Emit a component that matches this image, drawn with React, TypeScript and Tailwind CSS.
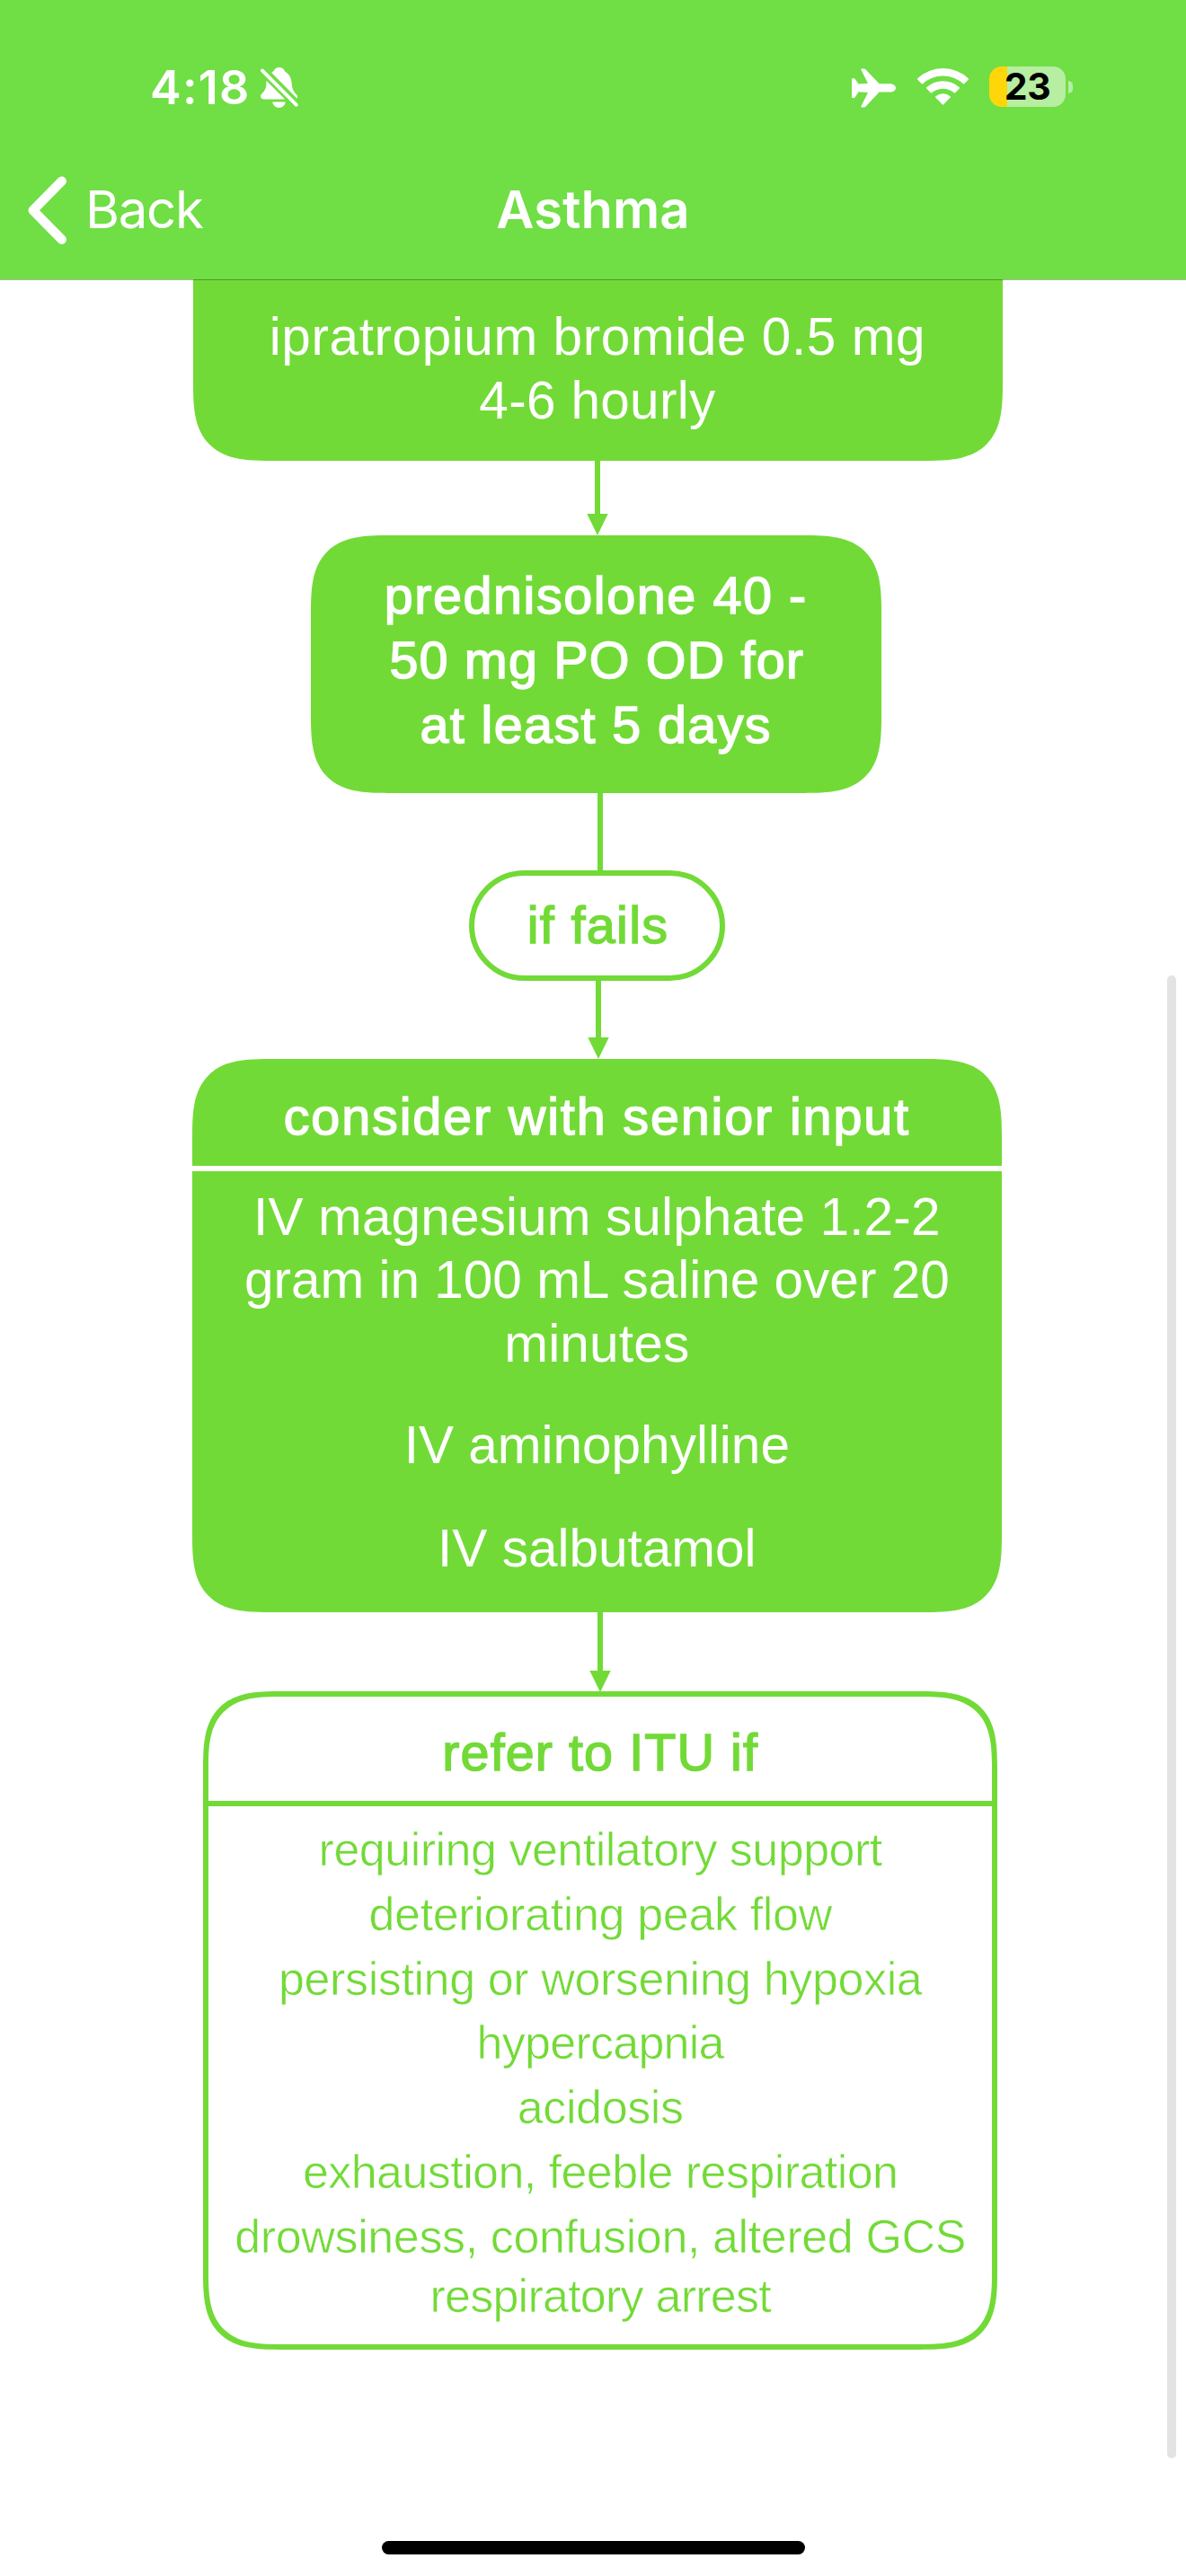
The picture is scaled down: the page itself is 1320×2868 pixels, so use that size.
import React from "react";

function BellOff() {
  return (
    <svg width="42" height="46" viewBox="0 0 42 46" fill="#fff">
      <path d="M12 5.7C13.6 5 14.4 4.400 15.200 3C17.300-1 24.300-1 26.300 3C27 4.400 27.600 5 29 5.900C33.200 9 34.500 13.500 34.800 19C35.200 25 37.500 27.500 40.300 30.800C41.300 32.200 41.200 33.600 40.400 34.500Z" />
      <path d="M6.400 14.700L27.200 35.600H3.600C0 35.600-1.200 31.600 1.500 29.200C5.500 25.400 6.800 22 6.400 14.700Z" />
      <path d="M13.300 38.600H27.700C27 42.500 24.300 45 20.500 45C16.700 45 14 42.500 13.300 38.600Z" />
      <path d="M2 3.700L39.700 41.600" stroke="#fff" strokeWidth="4" strokeLinecap="round" />
    </svg>
  );
}

function Plane() {
  return (
    <svg width="49" height="44" viewBox="0 0 49 44" fill="#fff">
      <path d="M0 11.200H2.500Q3.200 11.200 3.700 12L7.600 17.500L18 16.800L10.400 1.800Q10 .5 11.300 .5H13.500Q14.800 .5 15.600 1.400L30.600 17.200H42.500C46.500 17.200 49 19.600 49 21.900C49 24.200 46.500 26.600 42.500 26.600H30.600L15.600 42.600Q14.800 43.500 13.500 43.500H11.300Q10 43.500 10.400 42.200L18 27L7.600 26.300L3.700 32.200Q3.200 33 2.500 33H0Z" />
    </svg>
  );
}

function Wifi() {
  return (
    <svg width="57" height="43" viewBox="0 0 57 43" fill="#fff">
      <path d="M.3 13.800Q-.4 13 .3 12.300A41 41 0 0 1 56.700 12.300Q57.400 13 56.700 13.800L52.200 18.200Q51.600 18.800 50.900 18.200A33 33 0 0 0 6.100 18.200Q5.400 18.800 4.800 18.200Z" />
      <path d="M10.200 23.600Q9.600 23 10.200 22.300A27 27 0 0 1 46.800 22.300Q47.400 23 46.800 23.600L42.200 28.200Q41.500 28.800 40.800 28.200A19 19 0 0 0 16.200 28.200Q15.500 28.800 14.800 28.200Z" />
      <path d="M20.300 33.500Q19.700 32.800 20.400 32.200A13 13 0 0 1 36.600 32.200Q37.300 32.800 36.700 33.500L29.200 41.300Q28.500 42 27.800 41.300Z" />
    </svg>
  );
}

function Battery() {
  return (
    <div className="flex items-center gap-[3px]">
      <div className="flex h-[45px] w-[85px] items-center justify-center rounded-[14px] bg-[linear-gradient(90deg,#ffd60a_20px,#b7eea2_20px)] text-[41px] font-bold tracking-[-0.33px] text-black">
        23
      </div>
      <div className="h-[14px] w-[5px] rounded-r-full bg-[#b7eea2]" />
    </div>
  );
}

function Header() {
  return (
    <header className="relative z-10 h-[311px] bg-[#70de45] font-['Inter'] text-white">
      <div className="flex h-[196px] items-center pr-[126px] pl-[167px]">
        <span className="w-[123px] text-[52px] font-semibold tracking-[1.27px]">4:18</span>
        <BellOff />
        <div className="-mt-[3px] ml-auto flex items-center">
          <div className="mt-[3px] mr-6">
            <Plane />
          </div>
          <div className="mr-[23px]">
            <Wifi />
          </div>
          <Battery />
        </div>
      </div>
      <div className="grid h-[76px] grid-cols-[1fr_auto_1fr] items-center px-[31px] text-[58px] leading-none">
        <div className="flex items-center gap-[21px]">
          <svg width="43" height="76" viewBox="0 0 43 76" fill="none">
            <path d="M37.700 5.700L5.700 38.200L37.700 70.700" stroke="#fff" strokeWidth="10.400" strokeLinecap="round" strokeLinejoin="round" />
          </svg>
          <span className="-mt-0.5 tracking-[-1.22px]">Back</span>
        </div>
        <h1 className="-mt-0.5 font-semibold">Asthma</h1>
      </div>
      <div className="absolute top-full left-0 h-px w-full bg-black/30" />
    </header>
  );
}

function Arrow({ height, className }: { height: number; className: string }) {
  return (
    <svg className={className} width="24" height={height} viewBox={`0 0 24 ${height}`} fill="#72da37">
      <rect x="9" y="0" width="6" height={height - 20} />
      <path d={`M.3 ${height - 24}H23.700L12 ${height}Z`} />
    </svg>
  );
}

const regular = "text-[58.5px] leading-[70.5px]";
const medium = "text-[57.5px] leading-[72px] [-webkit-text-stroke:1.5px_currentColor]";
const light = "text-[52px] leading-[71.8px] [-webkit-text-stroke:0.6px_#fff]";

export default function App() {
  return (
    <div className="relative h-[2868px] w-[1320px] overflow-hidden bg-white font-['Liberation_Sans',sans-serif]">
      <Header />
      <main className="flex flex-col items-start text-center whitespace-nowrap text-white">
        <section className={`ml-[214.5px] h-[202px] w-[901px] rounded-b-[86px] bg-[#72da37] pt-[29px] [corner-shape:superellipse(1.55)] ${regular}`}>
          <p className="tracking-[0.58px]">ipratropium bromide 0.5 mg</p>
          <p className="tracking-[0.32px]">4-6 hourly</p>
        </section>
        <Arrow height={83} className="ml-[653px]" />

        <section className={`ml-[346px] h-[287px] w-[634.5px] rounded-[86px] bg-[#72da37] pt-[31.4px] [corner-shape:superellipse(1.55)] ${medium}`}>
          <p className="tracking-[1.58px]">prednisolone 40 -</p>
          <p className="pl-[2px] tracking-[1.17px]">50 mg PO OD for</p>
          <p className="tracking-[1.38px]">at least 5 days</p>
        </section>
        <div className="ml-[665px] h-[86px] w-[6px] bg-[#72da37]" />

        <section className={`ml-[522px] flex h-[123px] w-[285px] items-center justify-center rounded-full border-[6px] border-[#72da37] pb-[1.5px] pl-[2px] text-[#72da37] ${medium}`}>
          <p className="tracking-[1.34px]">if fails</p>
        </section>
        <Arrow height={87} className="ml-[654px]" />

        <section className="ml-[213.7px] flex h-[616px] w-[901.3px] flex-col overflow-hidden rounded-[86px] bg-[#72da37] [corner-shape:superellipse(1.55)]">
          <h2 className={`flex h-[124.500px] items-center justify-center border-b-[6px] border-white pt-[9.4px] font-normal ${medium}`}>
            <span className="tracking-[1.86px]">consider with senior input</span>
          </h2>
          <div className={`pt-4 ${regular}`}>
            <p className="tracking-[0.13px]">IV magnesium sulphate 1.2-2</p>
            <p>gram in 100 mL saline over 20</p>
            <p className="tracking-[0.19px]">minutes</p>
            <p className="mt-[43px]">IV aminophylline</p>
            <p className="mt-11">IV salbutamol</p>
          </div>
        </section>
        <Arrow height={89} className="ml-[656.300px]" />

        <section className="-mt-px ml-[226.4px] h-[733px] w-[883.6px] rounded-[86px] border-[6px] border-[#72da37] text-[#72da37] [corner-shape:superellipse(1.55)]">
          <h2 className={`flex h-[122px] items-center justify-center border-b-[6px] border-[#72da37] pt-[7px] ${medium}`}>
            <span className="tracking-[1.08px]">refer to ITU if</span>
          </h2>
          <div className={`pt-[13px] ${light}`}>
            <p className="tracking-[-0.5px]">requiring ventilatory support</p>
            <p className="tracking-[-0.34px]">deteriorating peak flow</p>
            <p className="tracking-[-0.39px]">persisting or worsening hypoxia</p>
            <p className="tracking-[-0.74px]">hypercapnia</p>
            <p className="tracking-[-0.4px]">acidosis</p>
            <p className="tracking-[-0.56px]">exhaustion, feeble respiration</p>
            <p className="tracking-[-0.38px]">drowsiness, confusion, altered GCS</p>
            <p className="-mt-[5.8px] tracking-[-0.75px]">respiratory arrest</p>
          </div>
        </section>
      </main>
      <div className="absolute top-[1086px] right-[11px] h-[1651px] w-[10px] rounded-full bg-[#e3e3e3]" />
      <div className="absolute top-[2829px] left-[425px] h-[15px] w-[471px] rounded-full bg-black" />
    </div>
  );
}
